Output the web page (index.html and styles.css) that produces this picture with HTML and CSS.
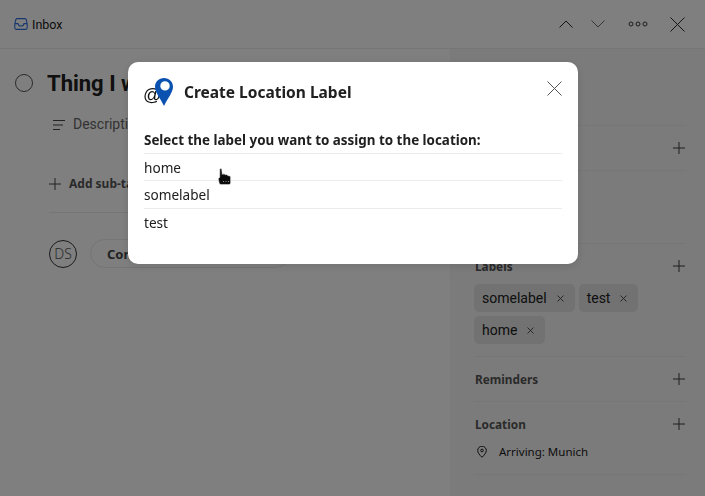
FILE: index.html
```html
<!DOCTYPE html>
<html lang="en">
<head>
<meta charset="utf-8">
<title>Create Location Label</title>
<link rel="stylesheet" href="styles.css">
</head>
<body>
<div class="page">
  <header class="topbar">
    <div class="crumb">
      <svg class="crumb-icon" width="14" height="14" viewBox="0 0 14 14" fill="none" stroke="#2f6fe0" stroke-width="1.1"><path d="M3.2 1.600h7.600c.7 0 1.200.4 1.400 1l1 4.400v3.800c0 .9-.7 1.600-1.600 1.600H2.400c-.9 0-1.600-.7-1.600-1.600V7l1-4.400c.2-.6.7-1 1.400-1z"/><path d="M1 6.600h3c.3 1.500 1.400 2.400 3 2.400s2.700-.9 3-2.400h3"/></svg>
      <span>Inbox</span>
    </div>
    <div class="top-actions">
      <svg width="14" height="8" viewBox="0 0 14 8" fill="none" stroke="#2a2a2a" stroke-width="1"><path d="M.5 7.500l6.500-6.500 6.500 6.500"/></svg>
      <svg class="dim" width="14" height="8" viewBox="0 0 14 8" fill="none" stroke="#6a6a6a" stroke-width="1"><path d="M.5.5l6.500 6.500 6.500-6.500"/></svg>
      <svg class="dots" width="20" height="6" viewBox="0 0 20 6" fill="none" stroke="#3a3a3a" stroke-width="1"><circle cx="3" cy="3" r="2"/><circle cx="10" cy="3" r="2"/><circle cx="17" cy="3" r="2"/></svg>
      <svg class="close" width="15" height="15" viewBox="0 0 15 15" fill="none" stroke="#2a2a2a" stroke-width="1"><path d="M.5.5l14 14M14.500.5l-14 14"/></svg>
    </div>
  </header>
  <div class="body">
    <main class="main">
      <div class="task-row">
        <span class="check"></span>
        <h1 class="task-title">Thing I w</h1>
      </div>
      <div class="desc-row">
        <svg width="12" height="10" viewBox="0 0 12 10" fill="none" stroke="#444" stroke-width="1"><path d="M0 .5h12M0 5h10M0 9.500h7"/></svg>
        <span>Description</span>
      </div>
      <div class="subtask-row">
        <svg width="12" height="12" viewBox="0 0 12 12" fill="none" stroke="#444" stroke-width="1"><path d="M6 0v12M0 6h12"/></svg>
        <span>Add sub-task</span>
      </div>
      <div class="comment-row">
        <span class="avatar">DS</span>
        <span class="comment-pill">Comment</span>
      </div>
    </main>
    <aside class="side">
      <section class="side-sec sec-a"></section>
      <section class="side-sec sec-b">
        <div class="sec-head">
          <svg class="plus" width="12" height="12" viewBox="0 0 12 12" fill="none" stroke="#3c3c3c" stroke-width="1"><path d="M6 0v12M0 6h12"/></svg></div>
      </section>
      <section class="side-sec sec-c"></section>
      <section class="side-sec sec-labels">
        <div class="sec-head"><span class="sec-title">Labels</span>
          <svg class="plus" width="12" height="12" viewBox="0 0 12 12" fill="none" stroke="#3c3c3c" stroke-width="1"><path d="M6 0v12M0 6h12"/></svg></div>
        <div class="chips">
          <span class="chip">somelabel <svg width="7" height="7" viewBox="0 0 7 7" fill="none" stroke="#444" stroke-width=".9"><path d="M.5.5l6 6M6.500.5l-6 6"/></svg></span>
          <span class="chip">test <svg width="7" height="7" viewBox="0 0 7 7" fill="none" stroke="#444" stroke-width=".9"><path d="M.5.5l6 6M6.500.5l-6 6"/></svg></span>
          <span class="chip">home <svg width="7" height="7" viewBox="0 0 7 7" fill="none" stroke="#444" stroke-width=".9"><path d="M.5.5l6 6M6.500.5l-6 6"/></svg></span>
        </div>
      </section>
      <section class="side-sec sec-rem">
        <div class="sec-head"><span class="sec-title">Reminders</span>
          <svg class="plus" width="12" height="12" viewBox="0 0 12 12" fill="none" stroke="#3c3c3c" stroke-width="1"><path d="M6 0v12M0 6h12"/></svg></div>
      </section>
      <section class="side-sec sec-loc">
        <div class="sec-head"><span class="sec-title">Location</span>
          <svg class="plus" width="12" height="12" viewBox="0 0 12 12" fill="none" stroke="#3c3c3c" stroke-width="1"><path d="M6 0v12M0 6h12"/></svg></div>
        <div class="loc-item">
          <svg width="10" height="12" viewBox="0 0 10 12" fill="none" stroke="#1c1c1c" stroke-width="1"><path d="M5 11.300C2.500 8.800.7 6.800.7 4.500a4.300 4.300 0 0 1 8.600 0c0 2.300-1.800 4.300-4.300 6.800z"/><circle cx="5" cy="4.500" r="1.300"/></svg>
          <span>Arriving: Munich</span>
        </div>
      </section>
    </aside>
  </div>
</div>

<div class="scrim"></div>

<div class="modal">
  <div class="modal-head">
    <div class="logo">
      <span class="logo-at">@</span>
      <svg class="logo-pin" width="18" height="28" viewBox="0 0 18 28"><path fill="#0b52b0" fill-rule="evenodd" d="M9 0c5 0 9 3.800 9 8.800 0 5.700-5.400 11.700-9 19.200C5.400 20.500 0 14.500 0 8.800 0 3.800 4 0 9 0zm1 3.200a4.700 4.700 0 1 0 0 9.400 4.700 4.700 0 0 0 0-9.400z"/></svg>
    </div>
    <h2 class="modal-title">Create Location Label</h2>
    <svg class="modal-close" width="15" height="15" viewBox="0 0 15 15" fill="none" stroke="#555" stroke-width="1"><path d="M.5.5l14 14M14.500.5l-14 14"/></svg>
  </div>
  <p class="modal-prompt">Select the label you want to assign to the location:</p>
  <ul class="label-list">
    <li>home</li>
    <li>somelabel</li>
    <li>test</li>
  </ul>
</div>

<svg class="cursor" width="14" height="18" viewBox="0 0 14 18"><path fill="#0c0c0c" stroke="#f4f4f4" stroke-width=".5" d="M1.800 1c.3-.7 1.600-.7 1.900 0l.6 5.600.7-1.400.9 1.400.9-.8.8 1.200 1-.5 1.200 1 1.900.6c.6.300.9.800.9 1.400v5.200c0 1.100-.9 1.900-2 1.900H3.300c-1 0-1.700-.5-2.100-1.300L.4 11.400c-.2-1 .2-1.700 1.300-1.900z"/><path stroke="#aaa" stroke-width=".8" fill="none" d="M5 13.500h1M7.500 13.500h1M10 13.500h1"/></svg>
</body>
</html>
```

FILE: styles.css
```css
* { box-sizing: border-box; }
html, body { margin: 0; height: 100%; overflow: hidden; }
body { font-family: "Noto Sans", "Liberation Sans", sans-serif; color: #202020; background: #fff; }

.page { width: 705px; height: 496px; display: flex; flex-direction: column; background: #fff; }

.topbar { height: 49px; flex: none; display: flex; justify-content: space-between; align-items: center; padding: 0 20px 0 14px; border-bottom: 1px solid #ececec; }
.crumb { display: flex; align-items: center; gap: 4px; font-family: "Roboto", sans-serif; font-size: 12.500px; color: #202020; }
.top-actions { display: flex; align-items: center; }
.top-actions .dim { margin-left: 18px; }
.top-actions .dots { margin-left: 23px; }
.top-actions .close { margin-left: 22px; }

.body { flex: 1; display: flex; min-height: 0; }
.main { width: 450px; padding: 0 0 0 15px; }
.task-row { display: flex; align-items: center; gap: 14px; margin-top: 20px; height: 28px; }
.check { width: 18px; height: 18px; border: 1px solid #555; border-radius: 50%; flex: none; }
.task-title { margin: 0; font-family: "Roboto", sans-serif; font-size: 22px; font-weight: 700; color: #202020; white-space: nowrap; }
.desc-row { display: flex; align-items: center; gap: 8px; margin: 16px 0 0 38px; height: 22px; font-family: "Roboto", sans-serif; font-size: 14px; color: #666; }
.desc-row svg { margin-top: 2px; }
.subtask-row { display: flex; align-items: center; gap: 8px; margin: 39px 0 0 34px; padding-bottom: 19px; width: 385px; border-bottom: 1px solid #ececec; font-size: 12px; font-weight: 700; color: #555; height: 39px; }
.comment-row { display: flex; align-items: center; gap: 13px; margin: 26px 0 0 34px; }
.avatar { width: 28px; height: 28px; border: 1px solid #333; border-radius: 50%; display: flex; align-items: center; justify-content: center; font-size: 14px; font-weight: 300; color: #555; flex: none; }
.comment-pill { height: 29px; padding: 0 16px; display: flex; align-items: center; border: 1px solid #eaeaea; border-radius: 15px; font-size: 13px; font-weight: 700; color: #444; width: 200px; }

.side { width: 255px; background: #f7f7f7; padding: 0 19px 0 25px; }
.side-sec { border-bottom: 1px solid #ececec; margin-left: -1px; }
.sec-a { height: 77px; }
.sec-b { height: 45px; padding-top: 13px; }
.sec-c { height: 73px; }
.sec-labels { height: 113px; padding-top: 13px; }
.sec-rem { height: 45px; padding-top: 13px; }
.sec-loc { height: 73px; padding-top: 13px; }
.sec-head { display: flex; justify-content: space-between; align-items: center; height: 18px; padding-left: 1px; padding-right: 1px; }
.plus { margin-left: auto; }
.sec-title { font-size: 11.800px; font-weight: 700; color: #555; }
.chips { display: flex; flex-wrap: wrap; gap: 4px; margin-top: 9px; }
.chip { height: 28px; display: flex; align-items: center; gap: 10px; padding: 0 11px 0 8px; border-radius: 5px; background: #e4e4e4; font-family: "Roboto", sans-serif; font-size: 14px; color: #202020; }
.loc-item { display: flex; align-items: center; gap: 12px; margin: 11px 0 0 3px; font-size: 11.500px; color: #202020; }

.scrim { position: fixed; inset: 0; background: rgba(0, 0, 0, .5); }

.modal { position: fixed; left: 128px; top: 62px; width: 450px; height: 202px; background: #fff; border-radius: 10px; padding: 16px 16px 0; box-shadow: 0 2px 10px rgba(0, 0, 0, .12); }
.modal-head { display: flex; align-items: center; height: 30px; position: relative; }
.logo { width: 30px; height: 30px; position: relative; flex: none; }
.logo-at { position: absolute; left: -1px; top: 4px; font-family: "Liberation Sans", sans-serif; font-size: 18px; line-height: 26px; color: #111; }
.logo-pin { position: absolute; left: 11px; top: 0; }
.modal-title { margin: -2px 0 0 10px; font-size: 15.500px; font-weight: 700; color: #202020; white-space: nowrap; }
.modal-close { position: absolute; right: 0; top: 3px; }
.modal-prompt { margin: 22px 0 0; height: 20px; line-height: 20px; font-size: 13.400px; font-weight: 700; color: #202020; white-space: nowrap; }
.label-list { list-style: none; margin: 3px 0 0; padding: 0; }
.label-list li { height: 27px; line-height: 27px; border-top: 1px solid #ececec; font-size: 13.600px; color: #202020; }
.label-list li:nth-child(2) { height: 28px; }

.cursor { position: fixed; left: 218px; top: 168px; }
```
